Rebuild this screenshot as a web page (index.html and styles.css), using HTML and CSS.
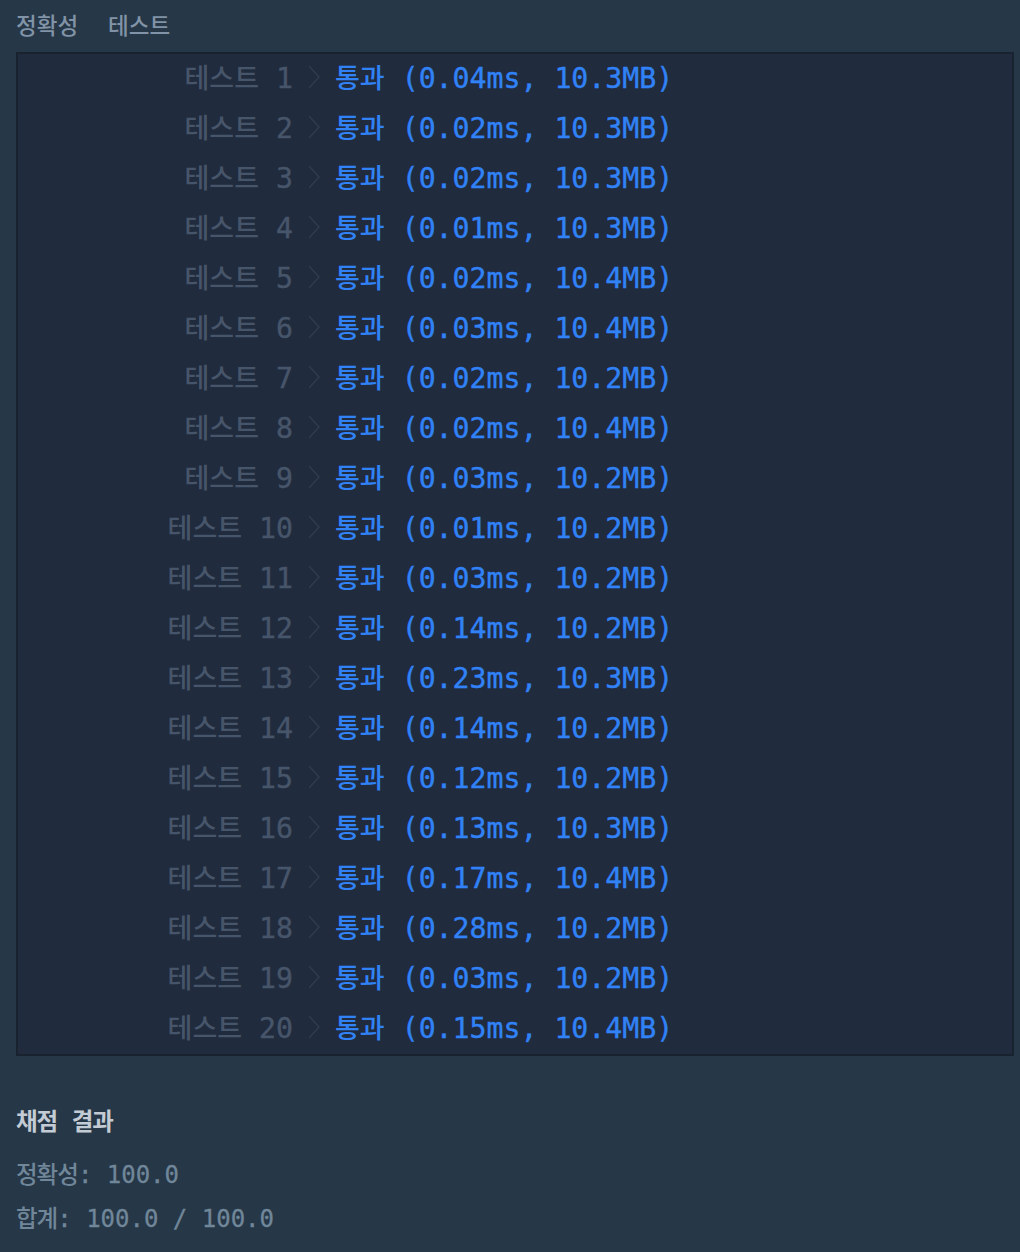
FILE: index.html
```html
<!DOCTYPE html>
<html>

<head>
    <meta charset="utf-8">
    <link rel="stylesheet" href="styles.css">
</head>

<body>
    <div class="tabs">
        <span class="tab">정확성</span>
        <span class="tab">테스트</span>
    </div>

    <div class="console">
        <div class="row"><span class="label"><span class="ko">테스트</span> 1</span><svg class="chevron" viewBox="0 0 12 24"><polyline points="1,1 11,12 1,23" /></svg><span class="result"><span class="ko">통과</span> (0.04ms, 10.3MB)</span></div>
        <div class="row"><span class="label"><span class="ko">테스트</span> 2</span><svg class="chevron" viewBox="0 0 12 24"><polyline points="1,1 11,12 1,23" /></svg><span class="result"><span class="ko">통과</span> (0.02ms, 10.3MB)</span></div>
        <div class="row"><span class="label"><span class="ko">테스트</span> 3</span><svg class="chevron" viewBox="0 0 12 24"><polyline points="1,1 11,12 1,23" /></svg><span class="result"><span class="ko">통과</span> (0.02ms, 10.3MB)</span></div>
        <div class="row"><span class="label"><span class="ko">테스트</span> 4</span><svg class="chevron" viewBox="0 0 12 24"><polyline points="1,1 11,12 1,23" /></svg><span class="result"><span class="ko">통과</span> (0.01ms, 10.3MB)</span></div>
        <div class="row"><span class="label"><span class="ko">테스트</span> 5</span><svg class="chevron" viewBox="0 0 12 24"><polyline points="1,1 11,12 1,23" /></svg><span class="result"><span class="ko">통과</span> (0.02ms, 10.4MB)</span></div>
        <div class="row"><span class="label"><span class="ko">테스트</span> 6</span><svg class="chevron" viewBox="0 0 12 24"><polyline points="1,1 11,12 1,23" /></svg><span class="result"><span class="ko">통과</span> (0.03ms, 10.4MB)</span></div>
        <div class="row"><span class="label"><span class="ko">테스트</span> 7</span><svg class="chevron" viewBox="0 0 12 24"><polyline points="1,1 11,12 1,23" /></svg><span class="result"><span class="ko">통과</span> (0.02ms, 10.2MB)</span></div>
        <div class="row"><span class="label"><span class="ko">테스트</span> 8</span><svg class="chevron" viewBox="0 0 12 24"><polyline points="1,1 11,12 1,23" /></svg><span class="result"><span class="ko">통과</span> (0.02ms, 10.4MB)</span></div>
        <div class="row"><span class="label"><span class="ko">테스트</span> 9</span><svg class="chevron" viewBox="0 0 12 24"><polyline points="1,1 11,12 1,23" /></svg><span class="result"><span class="ko">통과</span> (0.03ms, 10.2MB)</span></div>
        <div class="row"><span class="label"><span class="ko">테스트</span> 10</span><svg class="chevron" viewBox="0 0 12 24"><polyline points="1,1 11,12 1,23" /></svg><span class="result"><span class="ko">통과</span> (0.01ms, 10.2MB)</span></div>
        <div class="row"><span class="label"><span class="ko">테스트</span> 11</span><svg class="chevron" viewBox="0 0 12 24"><polyline points="1,1 11,12 1,23" /></svg><span class="result"><span class="ko">통과</span> (0.03ms, 10.2MB)</span></div>
        <div class="row"><span class="label"><span class="ko">테스트</span> 12</span><svg class="chevron" viewBox="0 0 12 24"><polyline points="1,1 11,12 1,23" /></svg><span class="result"><span class="ko">통과</span> (0.14ms, 10.2MB)</span></div>
        <div class="row"><span class="label"><span class="ko">테스트</span> 13</span><svg class="chevron" viewBox="0 0 12 24"><polyline points="1,1 11,12 1,23" /></svg><span class="result"><span class="ko">통과</span> (0.23ms, 10.3MB)</span></div>
        <div class="row"><span class="label"><span class="ko">테스트</span> 14</span><svg class="chevron" viewBox="0 0 12 24"><polyline points="1,1 11,12 1,23" /></svg><span class="result"><span class="ko">통과</span> (0.14ms, 10.2MB)</span></div>
        <div class="row"><span class="label"><span class="ko">테스트</span> 15</span><svg class="chevron" viewBox="0 0 12 24"><polyline points="1,1 11,12 1,23" /></svg><span class="result"><span class="ko">통과</span> (0.12ms, 10.2MB)</span></div>
        <div class="row"><span class="label"><span class="ko">테스트</span> 16</span><svg class="chevron" viewBox="0 0 12 24"><polyline points="1,1 11,12 1,23" /></svg><span class="result"><span class="ko">통과</span> (0.13ms, 10.3MB)</span></div>
        <div class="row"><span class="label"><span class="ko">테스트</span> 17</span><svg class="chevron" viewBox="0 0 12 24"><polyline points="1,1 11,12 1,23" /></svg><span class="result"><span class="ko">통과</span> (0.17ms, 10.4MB)</span></div>
        <div class="row"><span class="label"><span class="ko">테스트</span> 18</span><svg class="chevron" viewBox="0 0 12 24"><polyline points="1,1 11,12 1,23" /></svg><span class="result"><span class="ko">통과</span> (0.28ms, 10.2MB)</span></div>
        <div class="row"><span class="label"><span class="ko">테스트</span> 19</span><svg class="chevron" viewBox="0 0 12 24"><polyline points="1,1 11,12 1,23" /></svg><span class="result"><span class="ko">통과</span> (0.03ms, 10.2MB)</span></div>
        <div class="row"><span class="label"><span class="ko">테스트</span> 20</span><svg class="chevron" viewBox="0 0 12 24"><polyline points="1,1 11,12 1,23" /></svg><span class="result"><span class="ko">통과</span> (0.15ms, 10.4MB)</span></div>
    </div>

    <div class="summary">
        <div class="summary-title"><span class="ko">채점</span> <span class="ko">결과</span></div>
        <div class="summary-line"><span class="ko">정확성</span>: 100.0</div>
        <div class="summary-line"><span class="ko">합계</span>: 100.0 / 100.0</div>
    </div>
</body>

</html>
```

FILE: styles.css
```css
* {
    box-sizing: border-box;
}

html,
body {
    margin: 0;
    padding: 0;
    background: #263747;
}

body {
    padding: 0 6px 0 16px;
    font-family: "DejaVu Sans Mono", "Noto Sans CJK KR", monospace;
}

.ko {
    font-family: "Noto Sans CJK KR", "Noto Sans", sans-serif;
}

.tabs {
    height: 48px;
    margin-bottom: 4px;
    display: flex;
    align-items: center;
    gap: 30px;
}

.tab {
    font-family: "Noto Sans CJK KR", sans-serif;
    font-size: 22.5px;
    font-weight: 500;
    color: #8193a6;
}

.console {
    width: 998px;
    background: #202b3d;
    border: 2px solid #19222f;
}

.row {
    height: 50px;
    padding-bottom: 5px;
    display: flex;
    align-items: center;
    font-size: 28.2px;
    white-space: pre;
    -webkit-text-stroke: 0.4px currentColor;
}

.row .ko {
    font-size: 27px;
    font-weight: 500;
    letter-spacing: 0;
    -webkit-text-stroke: 0;
}

.label {
    width: 275px;
    text-align: right;
    color: #47556a;
}

.chevron {
    width: 12px;
    height: 24px;
    margin-left: 15px;
    fill: none;
    stroke: #2f3b4e;
    stroke-width: 1.5;
}

.result {
    margin-left: 15px;
    color: #3182f6;
}

.summary {
    padding-top: 49px;
}

.summary-title {
    height: 30px;
    line-height: 30px;
    font-size: 24px;
    font-weight: bold;
    color: #c3cbd4;
    white-space: pre;
}

.summary-title .ko {
    font-size: 23.5px;
    font-weight: 700;
    letter-spacing: -1px;
}

.summary-title + .summary-line {
    margin-top: 16px;
}

.summary-line {
    height: 44px;
    line-height: 44px;
    font-size: 24px;
    color: #708699;
    white-space: pre;
    -webkit-text-stroke: 0.3px currentColor;
}

.summary-line .ko {
    font-size: 23.5px;
    font-weight: 500;
    letter-spacing: -1px;
    -webkit-text-stroke: 0;
}
```
